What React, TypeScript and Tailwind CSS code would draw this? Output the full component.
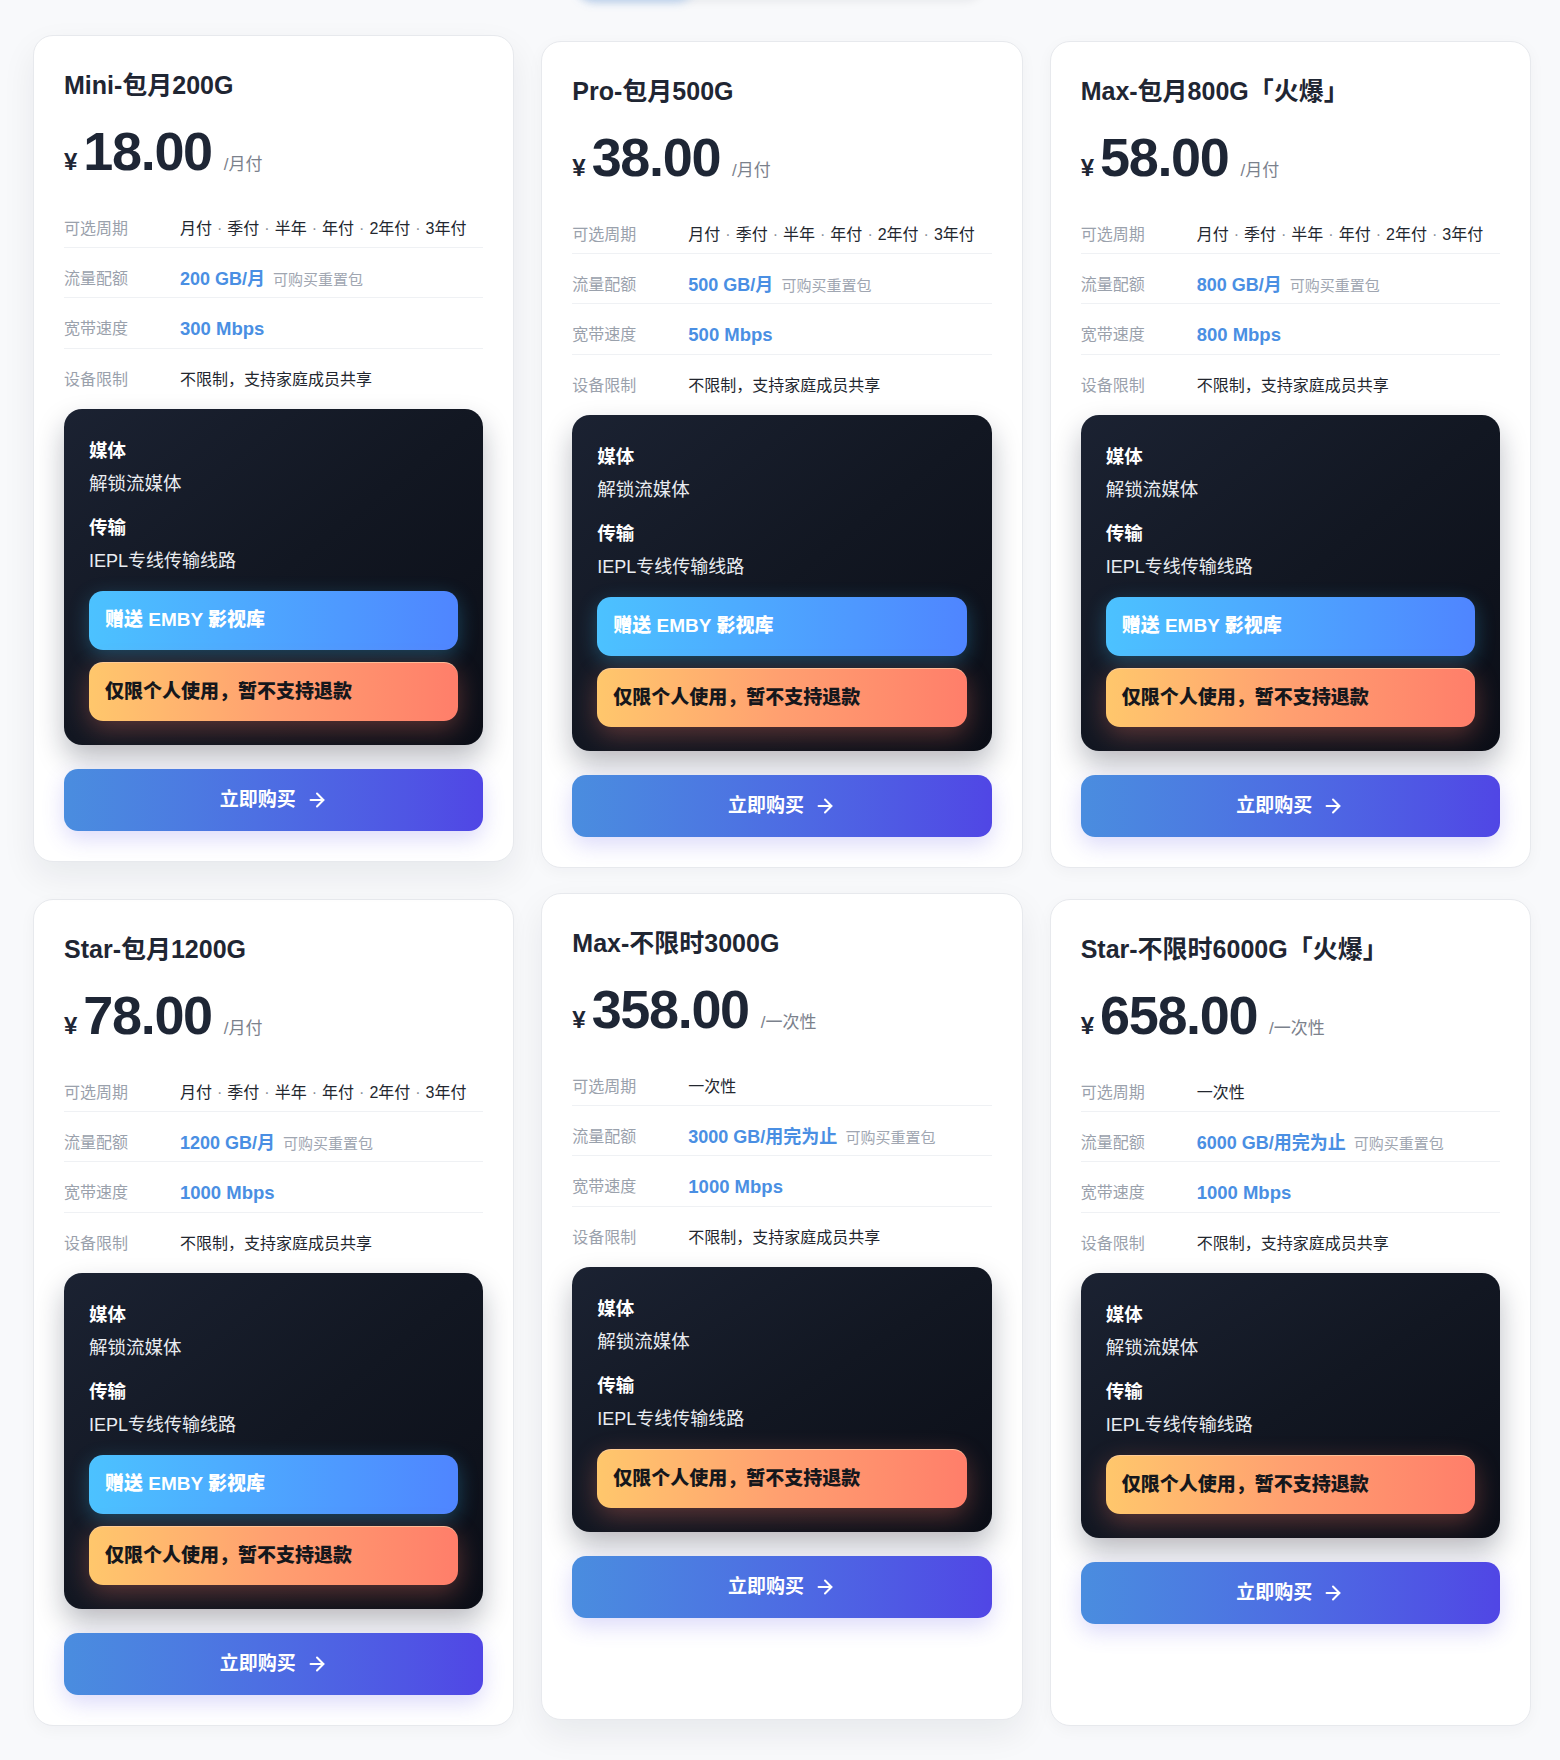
import { ArrowRight } from 'lucide-react'
import clsx from 'clsx'

type Plan = {
  name: string
  price: string
  unit: string
  periods: string[]
  traffic: string
  speed: string
  emby: boolean
  raised?: boolean
}

const monthly = ['月付', '季付', '半年', '年付', '2年付', '3年付']

const plans: Plan[] = [
  { name: 'Mini-包月200G', price: '18.00', unit: '月付', periods: monthly, traffic: '200 GB/月', speed: '300 Mbps', emby: true, raised: true },
  { name: 'Pro-包月500G', price: '38.00', unit: '月付', periods: monthly, traffic: '500 GB/月', speed: '500 Mbps', emby: true },
  { name: 'Max-包月800G「火爆」', price: '58.00', unit: '月付', periods: monthly, traffic: '800 GB/月', speed: '800 Mbps', emby: true },
  { name: 'Star-包月1200G', price: '78.00', unit: '月付', periods: monthly, traffic: '1200 GB/月', speed: '1000 Mbps', emby: true },
  { name: 'Max-不限时3000G', price: '358.00', unit: '一次性', periods: ['一次性'], traffic: '3000 GB/用完为止', speed: '1000 Mbps', emby: false, raised: true },
  { name: 'Star-不限时6000G「火爆」', price: '658.00', unit: '一次性', periods: ['一次性'], traffic: '6000 GB/用完为止', speed: '1000 Mbps', emby: false },
]

function Row({ label, last, tall, children }: { label: string; last?: boolean; tall?: boolean; children: React.ReactNode }) {
  return (
    <div
      className={clsx(
        'flex items-start pt-[19px]',
        tall ? 'h-[51px]' : 'h-[50px]',
        !last && 'border-b border-[#eff1f4]'
      )}
    >
      <span className="h-6 w-[116px] shrink-0 text-base leading-6 text-[#9aa1ac]">{label}</span>
      <div className="flex h-6 items-baseline leading-6">{children}</div>
    </div>
  )
}

function PlanCard({ plan }: { plan: Plan }) {
  return (
    <div
      className={clsx(
        'flex flex-col rounded-[20px] border border-[#e7e9ed] bg-white px-[30px] pt-[33px] pb-[30px]',
        plan.raised
          ? '-translate-y-1.5 shadow-[0_14px_34px_rgba(15,23,42,0.07)]'
          : 'shadow-[0_4px_16px_rgba(15,23,42,0.04)]'
      )}
    >
      <h3 className="h-8 text-[25px] font-bold leading-8 text-[#1f2633]">{plan.name}</h3>

      <div className="mt-[23px] flex h-[54px] items-baseline text-[#1e2635]">
        <span className="text-[24px] font-bold leading-none">¥</span>
        <span className="ml-[6px] text-[54px] font-bold leading-none tracking-tight">{plan.price}</span>
        <span className="ml-3 text-[17px] leading-none text-[#7b818c]">/{plan.unit}</span>
      </div>

      <div className="mt-5">
        <Row label="可选周期">
          <span className="text-base text-[#23272f]">
            {plan.periods.map((p, i) => (
              <span key={p}>
                {i > 0 && <span className="mx-[5px] text-[#8b9099]">·</span>}
                {p}
              </span>
            ))}
          </span>
        </Row>
        <Row label="流量配额">
          <span className="text-[18px] font-bold text-[#4a8fe3]">{plan.traffic}</span>
          <span className="ml-2 text-[15px] text-[#a0a6b1]">可购买重置包</span>
        </Row>
        <Row label="宽带速度" tall>
          <span className="text-[18.5px] font-bold text-[#4a8fe3]">{plan.speed}</span>
        </Row>
        <Row label="设备限制" last>
          <span className="text-base text-[#23272f]">不限制，支持家庭成员共享</span>
        </Row>
      </div>

      <div className="mt-[10px] rounded-[18px] bg-linear-to-br from-[#1b2232] via-[#121722] to-[#0b0e17] px-[25px] pt-7 pb-6 shadow-[0_14px_28px_rgba(15,23,42,0.28)]">
        <p className="h-7 text-[18.5px] font-bold leading-7 text-white">媒体</p>
        <p className="mt-[5px] h-7 text-[18.5px] leading-7 text-[#e9ecf1]">解锁流媒体</p>
        <p className="mt-4 h-7 text-[18.5px] font-bold leading-7 text-white">传输</p>
        <p className="mt-[5px] h-7 text-[18px] leading-7 text-[#e9ecf1]">IEPL专线传输线路</p>
        <div className="mt-4 flex flex-col gap-3">
          {plan.emby && (
            <div className="flex h-[59px] items-center rounded-[14px] bg-linear-to-r from-[#4cc2ff] to-[#4f85ff] px-4 text-[19px] font-black text-white shadow-[0_6px_20px_rgba(56,189,248,0.3)]">
              赠送 EMBY 影视库
            </div>
          )}
          <div className="flex h-[59px] items-center rounded-[14px] border-t border-[#ffd0a8]/70 bg-linear-to-r from-[#ffc76c] via-[#ff9f70] to-[#ff7e6a] px-4 text-[19px] font-black text-[#15171c] shadow-[0_8px_26px_rgba(255,120,100,0.32)]">
            仅限个人使用，暂不支持退款
          </div>
        </div>
      </div>

      <button className="mt-6 flex h-[62px] w-full items-center justify-center gap-2.5 rounded-[14px] bg-linear-to-r from-[#4a8ddf] to-[#5046e5] text-[19px] font-bold text-white shadow-[0_8px_22px_rgba(79,70,229,0.2)]">
        立即购买
        <ArrowRight size={22} strokeWidth={2.2} />
      </button>
    </div>
  )
}

export default function App() {
  return (
    <div className="min-h-[1760px] overflow-hidden bg-[#f8f9fb] [font-family:'Liberation_Sans','Noto_Sans_CJK_SC',sans-serif]">
      {/* tab bar above, scrolled mostly out of view */}
      <div className="mx-auto -mt-[42px] flex h-[40px] w-[410px] rounded-full bg-[#f8f9fb] shadow-[0_3px_10px_rgba(15,23,42,0.08)]">
        <div className="h-full w-[120px] rounded-full shadow-[0_4px_10px_rgba(74,141,223,0.35)]" />
      </div>
      <div className="mt-[43px] grid grid-cols-3 gap-x-[27px] gap-y-[31px] pl-[33px] pr-[29px] pb-[34px]">
        {plans.map((plan) => (
          <PlanCard key={plan.name} plan={plan} />
        ))}
      </div>
    </div>
  )
}
